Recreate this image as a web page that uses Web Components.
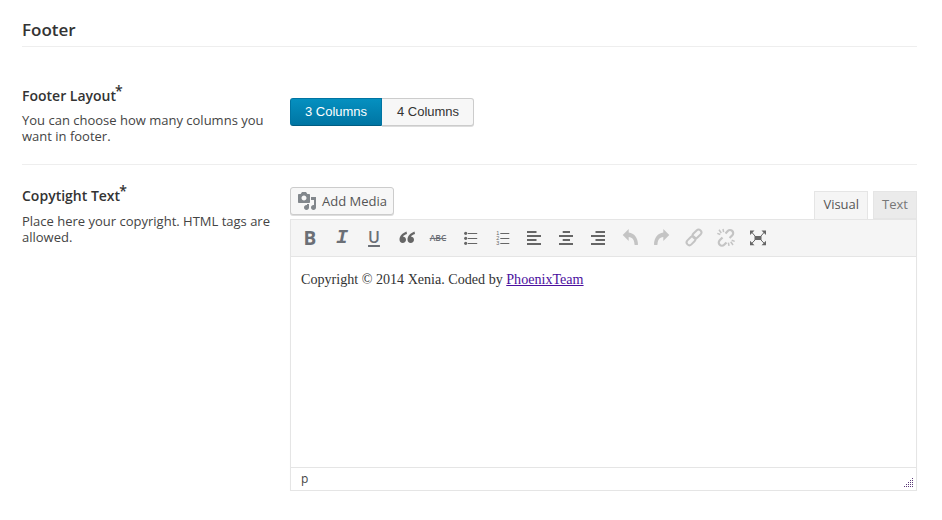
<!DOCTYPE html>
<html>
<head>
<meta charset="utf-8">
<title>Footer options</title>
<style>
body { margin: 0; background: #fff; font-family: "Open Sans", sans-serif; color: #333; }
</style>
</head>
<body>
<option-panel>
  <section-title>Footer</section-title>
  <option-row name="Footer Layout" desc="You can choose how many columns you want in footer." style="--row-pad: 39px 0 20px; --desc-gap: 6px; --line: 1">
    <button-set></button-set>
  </option-row>
  <option-row name="Copytight Text" desc="Place here your copyright. HTML tags are allowed." style="--row-pad: 21px 0 0; --desc-gap: 7px; --line: 0">
    <wp-editor>Copyright © 2014 Xenia. Coded by <a href="#">PhoenixTeam</a></wp-editor>
  </option-row>
</option-panel>

<script>
const define = (name, css, html) => {
  customElements.define(name, class extends HTMLElement {
    connectedCallback() {
      if (this.shadowRoot) return;
      const shadow = this.attachShadow({ mode: "open" });
      const body = typeof html === "function" ? html(this) : html;
      shadow.innerHTML = `<style>${css}</style>${body}`;
    }
  });
};

define("option-panel", `
:host { display: block; padding: 19px 25px 0 22px; }
`, `<slot></slot>`);

define("section-title", `
:host {
  display: block;
  font-size: 17px;
  font-weight: 600;
  line-height: 22px;
  color: #333;
  padding-bottom: 5px;
  border-bottom: 1px solid #eee;
}
`, `<slot></slot>`);

define("option-row", `
:host { display: block; }
.row { display: flex; padding: var(--row-pad); }
.info { width: 268px; flex: none; }
.name { font-size: 14px; font-weight: 600; line-height: 20px; color: #333; }
.name sup { font-size: 14px; line-height: 0; vertical-align: 5px; font-weight: 600; margin-left: -1px; }
.desc { font-size: 13px; line-height: 16px; color: #444; margin-top: var(--desc-gap); }
.control { flex: 1; min-width: 0; }
hr { display: block; height: 1px; margin: 0; border: 0; background: #eee; }
`, (el) => `
<div class="row">
  <div class="info">
    <div class="name">${el.getAttribute("name")}<sup>*</sup></div>
    <div class="desc">${el.getAttribute("desc")}</div>
  </div>
  <div class="control"><slot></slot></div>
</div>
${el.style.getPropertyValue("--line").trim() === "1" ? "<hr>" : ""}`);

define("button-set", `
:host { display: flex; margin-top: 12px; font: 13px/26px "Liberation Sans", sans-serif; }
span { box-sizing: border-box; height: 28px; text-align: center; border: 1px solid; }
.on {
  width: 92px;
  color: #fff;
  background: linear-gradient(#0590c0, #0075a3);
  border-color: #0074a2;
  border-bottom-color: #005d82;
  border-radius: 3px 0 0 3px;
}
.off {
  width: 92px;
  padding-left: 1px;
  color: #333;
  background: #f7f7f7;
  border-color: #ccc;
  border-left: 0;
  border-radius: 0 3px 3px 0;
  box-shadow: 0 1px 0 #ddd;
}
`, `<span class="on">3 Columns</span><span class="off">4 Columns</span>`);

const ICONS = {
  ul: `<circle cx="5.700" cy="5.300" r="1.600"/><circle cx="5.700" cy="10.300" r="1.600"/><circle cx="5.700" cy="15.300" r="1.600"/><path d="M8 5h9.200v1H8zM8 10h9.200v1H8zM8 15h9.200v1H8z"/>`,
  ol: `<path d="M8.300 5h9v1h-9zM8.300 10h9v1h-9zM8.300 15h9v1h-9z"/><text x="4.200" y="7" font-size="5.500" font-family="Liberation Sans">1</text><text x="4.200" y="12" font-size="5.500" font-family="Liberation Sans">2</text><text x="4.200" y="17" font-size="5.500" font-family="Liberation Sans">3</text>`,
  left: `<path d="M3 3h9.500v2H3zM3 7h14v2H3zM3 11h9.500v2H3zM3 15h14v2H3z"/>`,
  center: `<path d="M6.700 3h7.300v2H6.700zM3 7h14v2H3zM6.700 11h7.300v2H6.700zM3 15h14v2H3z"/>`,
  right: `<path d="M7.500 3H17v2H7.500zM3 7h14v2H3zM7.500 11H17v2H7.500zM3 15h14v2H3z"/>`,
  quote: `<path d="M10.500 3.500C6.500 5 3.500 8 3.500 11.500c0 2 1.300 3.500 3.200 3.500s3.300-1.400 3.300-3.300-1.200-2.900-2.900-3C7.300 7.500 9 6.700 11 6zM18.500 3.500c-4 1.500-7 4.500-7 8 0 2 1.300 3.500 3.200 3.500s3.300-1.400 3.300-3.300-1.200-2.900-2.900-3c.2-1.200 1.900-2 3.900-2.700z"/>`,
  undo: `<path d="M2.700 7 8.700 1v3.500c5.500.5 9.300 5.500 9.300 12.200-.6.5-2.500.5-3.500 0 0-4.500-2-7.500-5.800-7.700V13z"/>`,
  redo: `<path d="M17.300 7 11.300 1v3.500C5.800 5 2 10 2 16.700c.6.5 2.500.5 3.500 0 0-4.500 2-7.500 5.800-7.700V13z"/>`,
  link: `<g fill="none" stroke="currentColor" stroke-width="2"><rect x="2" y="10" width="10" height="5.600" rx="2.800" transform="rotate(-45 7 12.800)"/><rect x="8" y="3.200" width="10" height="5.600" rx="2.800" transform="rotate(-45 13 6)"/></g>`,
  unlink: `<g fill="none" stroke="currentColor" stroke-width="2.200"><path d="M9.500 5.500 11.800 3a3 3 0 0 1 4.500 4.300L13.600 10"/><path d="M6.500 9.500 3.700 12.300a3 3 0 0 0 4.500 4.500L10.500 14.500"/></g><g fill="none" stroke="currentColor" stroke-width="1.500"><path d="M3 1.800 5.300 5M7 1l.6 3.200M1.300 5.400l3 1.100M17 17l-2.300-3.200M13 17.800l-.6-3.200M18.700 13.400l-3-1.100"/></g>`,
  full: `<path d="M2 2.500h4.500L2 7zM18 2.500v4.500l-4.500-4.500zM2 17.200v-4.500l4.500 4.500zM18 17.200h-4.500l4.500-4.500z"/><path d="M6.500 8h7v4h-7z"/><path d="M3.500 4 7 8M16.500 4 13 8M3.500 15.700 7 12M16.500 15.700 13 12" stroke="currentColor" stroke-width="1" fill="none"/>`,
};

define("tb-icon", `
:host { display: flex; width: 32px; height: 30px; align-items: center; justify-content: center; color: #666; }
:host([off]) { color: #c4c4c4; }
svg { display: block; width: 20px; height: 20px; fill: currentColor; }
.t { font: 700 19px/20px "Open Sans", sans-serif; color: #6b6f76; }
.i { font: italic 700 20px/20px "Liberation Mono", monospace; color: #6b6f76; }
.u { font: 600 16px/18px "Open Sans", sans-serif; color: #6b6f76; margin-bottom: 3px; text-decoration: underline; text-decoration-thickness: 2px; text-underline-offset: 2px; }
.s { font: 600 8.5px/20px "Open Sans", sans-serif; color: #6b6f76; text-decoration: line-through; }
`, (el) => {
  const name = el.getAttribute("name");
  if (name === "b") return `<span class="t">B</span>`;
  if (name === "i") return `<span class="i">I</span>`;
  if (name === "u") return `<span class="u">U</span>`;
  if (name === "s") return `<span class="s">ABC</span>`;
  return `<svg viewBox="0 0 20 20">${ICONS[name]}</svg>`;
});

define("wp-editor", `
:host { display: block; margin-top: 1px; }
.tools { display: flex; justify-content: space-between; align-items: flex-end; height: 32px; }
.media {
  display: flex;
  align-items: center;
  gap: 5px;
  box-sizing: border-box;
  width: 104px;
  height: 28px;
  margin-bottom: 4px;
  padding-left: 6px;
  font-size: 13px;
  color: #555;
  background: #f7f7f7;
  border: 1px solid #ccc;
  border-radius: 3px;
  box-shadow: 0 1px 0 #ddd;
}
.media svg { width: 20px; height: 20px; fill: #82878c; flex: none; }
.tabs { display: flex; gap: 5px; margin-bottom: -1px; font-size: 13px; line-height: 25px; }
.tabs span { box-sizing: border-box; height: 29px; padding: 0 8px; border: 1px solid #e5e5e5; }
.tabs .visual { color: #555; background: #f5f5f5; border-bottom-color: #f5f5f5; }
.tabs .text { color: #777; background: #ebebeb; height: 28px; margin-bottom: 1px; }
.box { position: relative; border: 1px solid #e5e5e5; box-shadow: 0 1px 1px rgba(0,0,0,.04); }
.bar { display: flex; align-items: center; box-sizing: border-box; height: 37px; padding: 0 0 0 3px; background: #f5f5f5; border-bottom: 1px solid #e5e5e5; }
.content { box-sizing: border-box; height: 210px; padding: 12px 10px; font: 14.1px/20px "Liberation Serif", serif; color: #333; }
.status { display: flex; align-items: center; height: 23px; padding: 0 0 1px 10px; font-size: 12px; color: #444; border-top: 1px solid #e5e5e5; box-sizing: border-box; }
.grip { position: absolute; right: 2px; bottom: 2px; width: 10px; height: 10px; }
::slotted(a) { color: #4b0f9e; }
`, () => `
<div class="tools">
  <div class="media">
    <svg viewBox="0 0 20 20"><path d="M13 11V4c0-.55-.45-1-1-1h-1.670L9 1H5L3.670 3H2c-.55 0-1 .45-1 1v7c0 .55.45 1 1 1h10c.55 0 1-.45 1-1zM7 4.500c1.380 0 2.500 1.120 2.500 2.500S8.380 9.500 7 9.500 4.500 8.380 4.500 7 5.620 4.500 7 4.500zM14 6h5v10.500c0 1.380-1.120 2.500-2.500 2.500S14 17.880 14 16.500s1.120-2.500 2.500-2.500c.17 0 .34.02.5.05V9h-3V6zm-4 8.050V13h2v3.500c0 1.380-1.120 2.500-2.500 2.500S7 17.880 7 16.500 8.120 14 9.500 14c.17 0 .34.02.5.05z"/></svg>
    Add Media
  </div>
  <div class="tabs"><span class="visual">Visual</span><span class="text">Text</span></div>
</div>
<div class="box">
  <div class="bar">
    <tb-icon name="b"></tb-icon><tb-icon name="i"></tb-icon><tb-icon name="u"></tb-icon>
    <tb-icon name="quote"></tb-icon><tb-icon name="s"></tb-icon><tb-icon name="ul"></tb-icon>
    <tb-icon name="ol"></tb-icon><tb-icon name="left"></tb-icon><tb-icon name="center"></tb-icon>
    <tb-icon name="right"></tb-icon><tb-icon name="undo" off></tb-icon><tb-icon name="redo" off></tb-icon>
    <tb-icon name="link" off></tb-icon><tb-icon name="unlink" off></tb-icon><tb-icon name="full"></tb-icon>
  </div>
  <div class="content"><slot></slot></div>
  <div class="status">p</div>
  <svg class="grip" viewBox="0 0 10 10" fill="#5b3a78"><path d="M8 0h1v1H8zM6 2h1v1H6zM8 2h1v1H8zM4 4h1v1H4zM6 4h1v1H6zM8 4h1v1H8zM2 6h1v1H2zM4 6h1v1H4zM6 6h1v1H6zM8 6h1v1H8zM0 8h1v1H0zM2 8h1v1H2zM4 8h1v1H4zM6 8h1v1H6zM8 8h1v1H8z"/></svg>
</div>`);
</script>
</body>
</html>
